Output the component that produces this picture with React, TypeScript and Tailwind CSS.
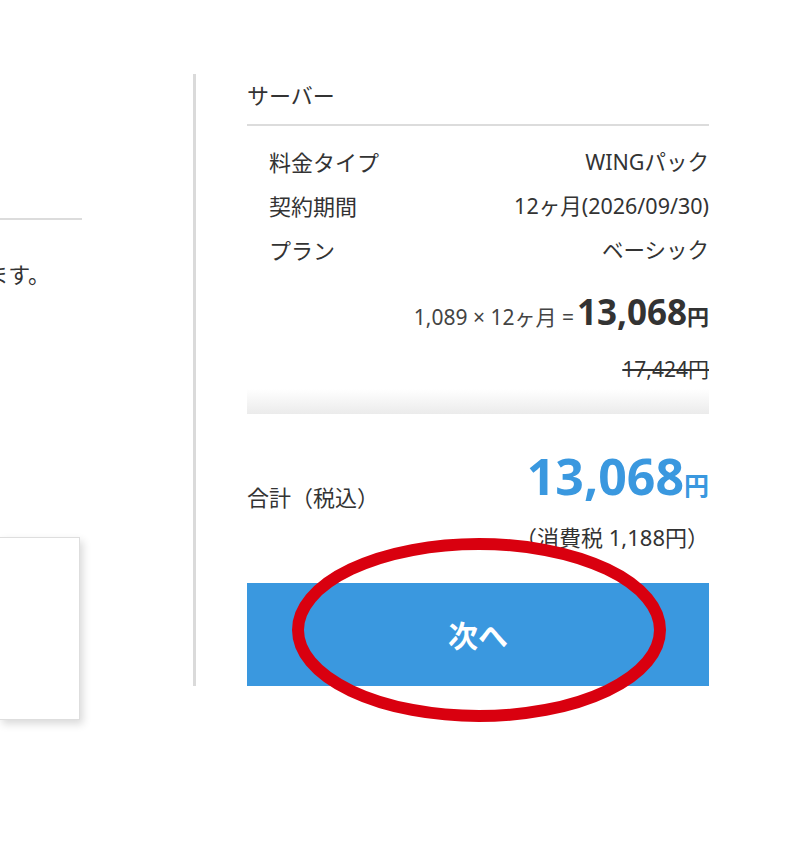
import React from "react";

const rows = [
  { label: "料金タイプ", value: "WINGパック" },
  { label: "契約期間", value: "12ヶ月(2026/09/30)" },
  { label: "プラン", value: "ベーシック" },
];

const App: React.FC = () => {
  return (
    <div
      className="relative w-[800px] h-[845px] bg-white overflow-hidden text-[#333]"
      style={{ fontFamily: '"Noto Sans", "Noto Sans CJK JP", sans-serif' }}
    >
      <div className="flex items-start pt-[74px]">
        {/* left column (cut off) */}
        <div className="w-[82px] shrink-0 flex flex-col">
          <div className="mt-[144px] border-t-2 border-[#dcdcdc]" />
          <div className="mt-[39px] flex justify-end overflow-hidden whitespace-nowrap pr-[32px] text-[22px] leading-[30px]">
            ご利用いただけます。
          </div>
          <div className="mt-[248px] -ml-px w-[81px] h-[183px] border border-[#dedede] bg-white shadow-[3px_4px_8px_rgba(0,0,0,0.15)]" />
        </div>

        {/* right column */}
        <div className="ml-[111px] border-l-[3px] border-[#dadada] pl-[51px]">
          <div className="w-[462px]">
            <div className="pt-[7px] pb-[15px] border-b-2 border-[#dcdcdc] text-[22px] leading-[28px]">
              サーバー
            </div>

            <div className="mt-[14px] pl-[22px]">
              {rows.map((r) => (
                <div
                  key={r.label}
                  className="flex justify-between text-[21.5px] leading-[44px]"
                >
                  <span className="text-[22px]">{r.label}</span>
                  <span>{r.value}</span>
                </div>
              ))}
            </div>

            <div className="mt-[18px] flex items-baseline justify-end whitespace-nowrap leading-[44px]">
              <span className="text-[21px] text-[#444]">1,089 × 12ヶ月 = </span>
              <span className="text-[35px] font-bold ml-[3px]">13,068</span>
              <span className="text-[22px] font-bold">円</span>
            </div>

            <div className="mt-[15px] text-right text-[21px] leading-[30px] line-through">
              17,424円
            </div>

            <div className="mt-[5px] h-[25px] bg-gradient-to-b from-white to-[#ebebeb]" />

            <div className="mt-[37px] flex justify-between items-start">
              <div className="pt-[31px] text-[22px] leading-[30px]">合計（税込）</div>
              <div className="flex flex-col items-end">
                <div className="flex items-baseline h-[50px] text-[#3a98df] font-bold">
                  <span className="text-[50px] leading-[50px]">13,068</span>
                  <span className="text-[25px]">円</span>
                </div>
                <div className="mt-[21px] text-[22px] leading-[30px]">
                  （消費税 1,188円）
                </div>
              </div>
            </div>

            <button className="mt-[31px] w-full h-[103px] bg-[#3a98df] text-white text-[30px] font-bold flex items-center justify-center pt-[2px]">
              次へ
            </button>
          </div>
        </div>
      </div>

      {/* red annotation ellipse */}
      <svg
        className="absolute left-0 top-0 pointer-events-none"
        width="800"
        height="845"
      >
        <ellipse
          cx="479"
          cy="630"
          rx="181"
          ry="86"
          fill="none"
          stroke="#d9000f"
          strokeWidth="12"
        />
      </svg>
    </div>
  );
};

export default App;
